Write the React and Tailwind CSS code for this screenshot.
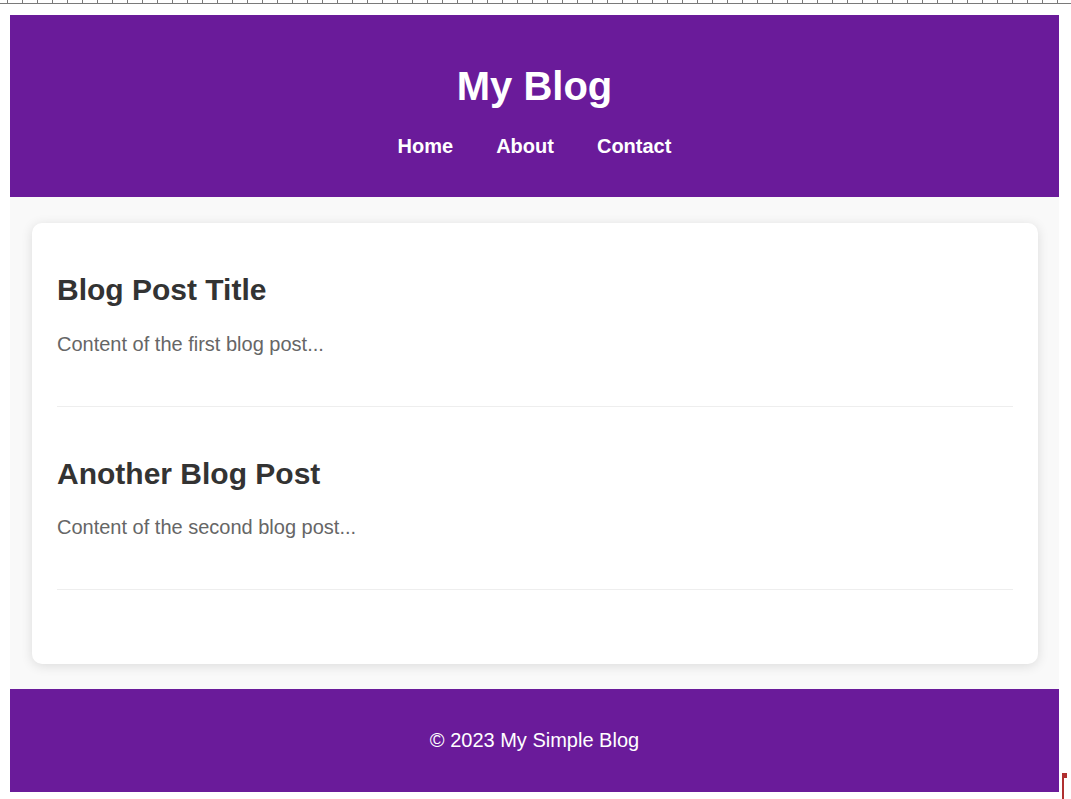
import React from 'react';

const navLinks = ['Home', 'About', 'Contact'];

const posts = [
  { id: 1, title: 'Blog Post Title', body: 'Content of the first blog post...' },
  { id: 2, title: 'Another Blog Post', body: 'Content of the second blog post...' },
];

const Ruler = () => (
  <div className="flex h-[4px] border-b border-[#7a7a7a] pl-[7px] overflow-hidden">
    {Array.from({ length: 72 }).map((_, i) => (
      <span key={i} className="shrink-0 w-[15px] h-[3px] border-l border-[#7a7a7a]" />
    ))}
  </div>
);

const App = () => {
  return (
    <div className="relative min-h-[799px] bg-white font-['Liberation_Sans',Arial,sans-serif]">
      <Ruler />
      <div className="ml-[10px] w-[1049px] pt-[11px] pb-[10px]">
        {/* header */}
        <header className="bg-[#6a1b9a] text-white text-center pt-[48px] pb-[39px]">
          <h1 className="text-[40px] font-bold leading-[46px] mb-[26px]">My Blog</h1>
          <nav className="flex justify-center gap-[43px] text-[20px] font-bold leading-[23px]">
            {navLinks.map((link) => (
              <a key={link} href="#" className="text-white">
                {link}
              </a>
            ))}
          </nav>
        </header>

        {/* main */}
        <main className="bg-[#f9f9f9] pl-[22px] pr-[21px] pt-[26px] pb-[25px]">
          <div className="bg-white rounded-[10px] shadow-[0_2px_12px_rgba(0,0,0,0.12)] px-[25px] pt-[25px] pb-[49px] flex flex-col">
            {posts.map((post) => (
              <article key={post.id} className="flex flex-col mb-[25px] pb-[25px] border-b border-[#eeeeee]">
                <h2 className="text-[30px] font-bold leading-[34.5px] text-[#333333] mt-[25px] mb-[25px]">
                  {post.title}
                </h2>
                <p className="text-[20px] leading-[23px] text-[#666666] mb-[25px]">{post.body}</p>
              </article>
            ))}
          </div>
        </main>

        {/* footer */}
        <footer className="bg-[#6a1b9a] text-white text-center pt-[40px] pb-[40px]">
          <p className="text-[20px] leading-[23px]">© 2023 My Simple Blog</p>
        </footer>
      </div>

      {/* resize marker */}
      <div className="absolute left-[1062px] top-[773px] w-[2px] h-[26px] bg-[#b03030]" />
      <div className="absolute left-[1062px] top-[773px] w-[5px] h-[5px] bg-[#b03030]" />
    </div>
  );
};

export default App;
